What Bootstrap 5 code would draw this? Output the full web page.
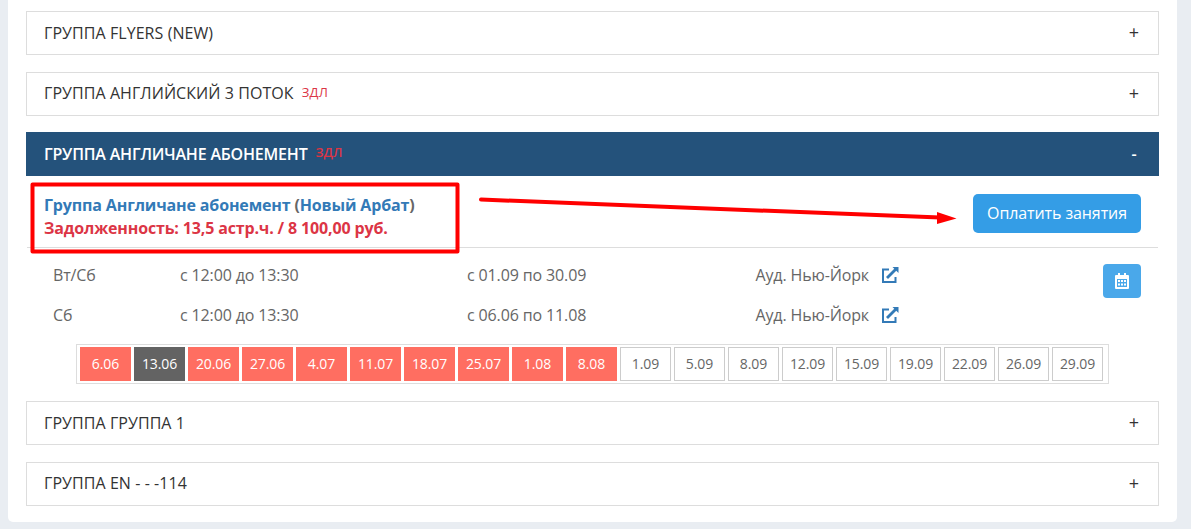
<!DOCTYPE html>
<html lang="ru">
<head>
<meta charset="utf-8">
<meta name="viewport" content="width=device-width, initial-scale=1">
<title>Группы</title>
<link href="https://cdn.jsdelivr.net/npm/bootstrap@5.3.0/dist/css/bootstrap.min.css" rel="stylesheet">
<style>
body{background:#e9edf2;font-family:"Open Sans","Noto Sans",sans-serif;font-size:16px;line-height:24px;color:#666;overflow:hidden}
.panel{width:1169px;height:522px;margin-left:8px;padding:11px 18px 0;border-radius:0 0 5px 5px}
.group-head{height:44px;border:1px solid #ddd;padding:0 17px;color:#333;font-weight:500}
.group-head+.group-head{margin-top:17px}
.group-head .title{letter-spacing:.07px}
.group-head+.group-head:not(.open) .title{margin-bottom:2px}
.group-head.open{background:#24527b;border-color:#24527b;color:#fff;margin-top:16px!important;font-weight:600}
.group-head.open .title{letter-spacing:-.19px}
.zdl{font-size:13px;color:#dc3545;margin:0 0 4px 8px;font-weight:400;letter-spacing:.3px}
.open .zdl{font-weight:600;letter-spacing:0}
.sign{width:14px;text-align:center;font-size:18px;margin-bottom:2px}
.open .sign{font-size:16px;margin-bottom:0}
.summary{height:72px;border-bottom:1px solid #ddd;margin:0 1px;padding:18px 17px 0;position:relative;font-weight:700;line-height:23px;letter-spacing:-.15px}
.summary a,.room a{color:#337ab7;text-decoration:none}
.debt{color:#dc3545}
.pay{width:168px;height:39px;background:#349de6;color:#fff;border:0;border-radius:5px;padding:0 0 2px;font-size:16px;letter-spacing:-.1px}
.pay:hover{background:#349de6;color:#fff}
.marker{position:absolute;left:0;top:0;z-index:2;pointer-events:none}
.lessons{padding:7px 18px 0 27px}
.lesson{height:40px;letter-spacing:-.13px}
.c-day{width:127px}.c-time{width:287px}.c-date{width:288.5px}
.cal{width:38px;height:34px;background:#4aa8ea;border:0;border-radius:4px;margin-top:9px}
.dates{width:1033px;height:40px;margin:9px 0 17px 50px;border:1px solid #ddd;padding:2px 3px;gap:3px;font-size:14px;letter-spacing:-.1px}
.dates span{width:51px;height:34px;border:1px solid #ccc;display:flex;align-items:center;justify-content:center}
.dates .due{background:#ff6e61;border-color:#ff6e61;color:#fff}
.dates .now{background:#636363;border-color:#636363;color:#fff}
</style>
</head>
<body>
<main class="panel bg-white">
  <div class="group-head d-flex align-items-center"><span class="title">ГРУППА FLYERS (NEW)</span><span class="sign ms-auto">+</span></div>
  <div class="group-head d-flex align-items-center"><span class="title">ГРУППА АНГЛИЙСКИЙ 3 ПОТОК</span><span class="zdl">ЗДЛ</span><span class="sign ms-auto">+</span></div>
  <div class="group-head open d-flex align-items-center"><span class="title">ГРУППА АНГЛИЧАНЕ АБОНЕМЕНТ</span><span class="zdl">ЗДЛ</span><span class="sign ms-auto">-</span></div>
  <div class="summary d-flex justify-content-between">
    <div><div class="place"><a href="#">Группа Англичане абонемент</a> (<a href="#">Новый Арбат</a>)</div><div class="debt">Задолженность: 13,5 астр.ч. / 8 100,00 руб.</div></div>
    <button class="btn pay">Оплатить занятия</button>
    <svg class="marker" width="940" height="80" viewBox="27 176 940 80"><rect x="32.5" y="184.500" width="425" height="67" fill="none" stroke="#f00" stroke-width="4" stroke-linejoin="round"/><path d="M481 199.500L940 217.600" stroke="#f00" stroke-width="4" stroke-linecap="round"/><path d="M937 212L956.500 218.500L937 224Z" fill="#f00"/></svg>
  </div>
  <div class="lessons d-flex">
    <div class="flex-grow-1">
      <div class="lesson d-flex align-items-center"><span class="c-day">Вт/Сб</span><span class="c-time">с 12:00 до 13:30</span><span class="c-date">с 01.09 по 30.09</span><span class="room d-flex align-items-center">Ауд. Нью-Йорк<a class="d-flex ms-2 ps-1" href="#"><svg width="20" height="18" viewBox="2 0 20 18"><use href="#ext"/></svg></a></span></div>
      <div class="lesson d-flex align-items-center"><span class="c-day">Сб</span><span class="c-time">с 12:00 до 13:30</span><span class="c-date">с 06.06 по 11.08</span><span class="room d-flex align-items-center">Ауд. Нью-Йорк<a class="d-flex ms-2 ps-1" href="#"><svg width="20" height="18" viewBox="2 0 20 18"><g id="ext" fill="none" stroke="currentColor" stroke-width="2"><path d="M10 3.500H4V16H16.500V11"/><path d="M8 12L17 3" stroke-width="2.800"/><path d="M13.500 1H19.500V7Z" fill="currentColor" stroke="none"/></g></svg></a></span></div>
    </div>
    <button class="btn cal p-0 d-flex align-items-center justify-content-center" aria-label="Календарь"><svg width="16" height="17" viewBox="0 0 16 17" fill="#fff" fill-rule="evenodd"><path d="M1 3Q1 2 2 2H4V0H6V2H10V0H12V2H14Q15 2 15 3V15Q15 16 14 16H2Q1 16 1 15ZM3 6V14H13V6Z"/><path d="M4 7h2v2H4zM7 7h2v2H7zM10 7h2v2h-2zM4 10.500h2v2H4zM7 10.500h2v2H7zM10 10.500h2v2h-2z"/></svg></button>
  </div>
  <div class="dates d-flex">
    <span class="due">6.06</span><span class="now">13.06</span><span class="due">20.06</span><span class="due">27.06</span><span class="due">4.07</span><span class="due">11.07</span><span class="due">18.07</span><span class="due">25.07</span><span class="due">1.08</span><span class="due">8.08</span><span>1.09</span><span>5.09</span><span>8.09</span><span>12.09</span><span>15.09</span><span>19.09</span><span>22.09</span><span>26.09</span><span>29.09</span>
  </div>
  <div class="group-head d-flex align-items-center"><span class="title">ГРУППА ГРУППА 1</span><span class="sign ms-auto">+</span></div>
  <div class="group-head d-flex align-items-center"><span class="title">ГРУППА EN - - -114</span><span class="sign ms-auto">+</span></div>
</main>
<script src="https://cdn.jsdelivr.net/npm/bootstrap@5.3.0/dist/js/bootstrap.bundle.min.js"></script>
</body>
</html>
